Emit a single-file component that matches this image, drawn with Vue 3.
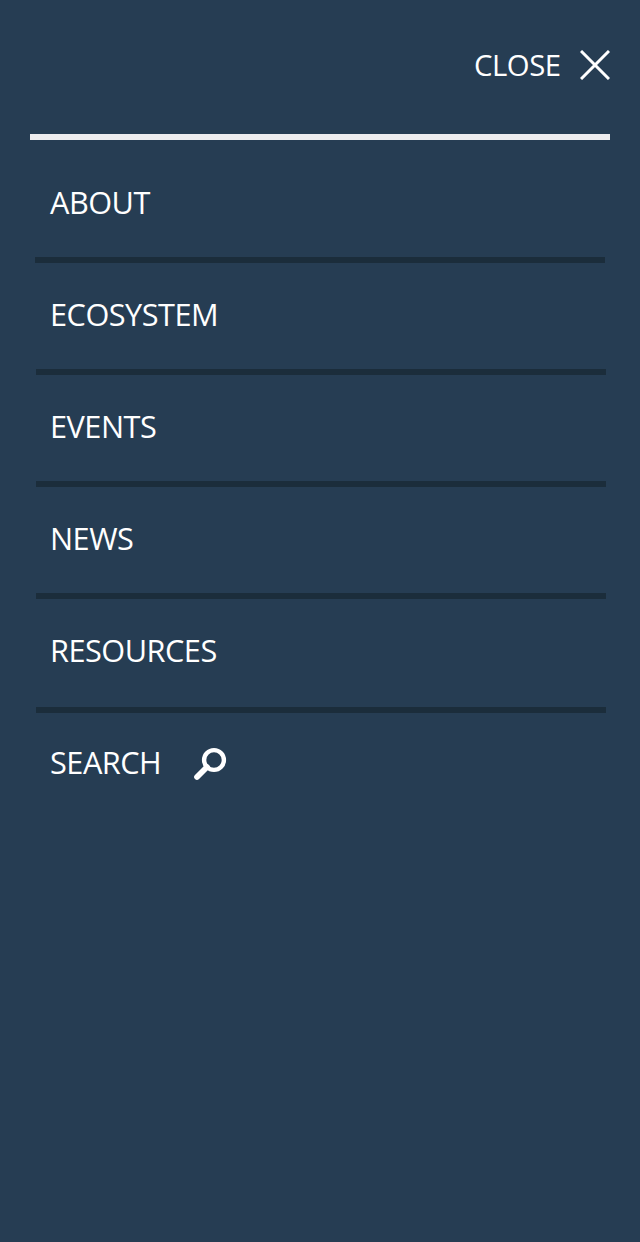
<script setup>
const items = [
  { label: 'ABOUT', size: 'first' },
  { label: 'ECOSYSTEM' },
  { label: 'EVENTS' },
  { label: 'NEWS' },
  { label: 'RESOURCES', size: 'last' },
]
</script>

<template>
  <nav class="menu">
    <header class="top">
      <button class="close">
        <span>CLOSE</span>
        <svg class="cross" width="30" height="30" viewBox="0 0 30 30">
          <path d="M1 1L29 29M29 1L1 29" fill="none" stroke="#fff" stroke-width="3" />
        </svg>
      </button>
    </header>
    <ul class="list">
      <li v-for="item in items" :key="item.label" class="item" :class="item.size">
        <a class="label">{{ item.label }}</a>
      </li>
      <li class="search">
        <a class="label">SEARCH</a>
        <svg class="glass" width="34" height="34" viewBox="0 0 34 34">
          <circle cx="21" cy="13" r="9.9" fill="none" stroke="#fff" stroke-width="4.4" />
          <path d="M14 20L4 30" fill="none" stroke="#fff" stroke-width="5.7" stroke-linecap="round" />
        </svg>
      </li>
    </ul>
  </nav>
</template>

<style>
body {
  background: #263d53;
}
</style>

<style scoped>
.menu {
  box-sizing: border-box;
  height: 1242px;
  padding: 0 30px;
  background: #263d53;
  color: #fff;
  font: 30.7px/40px "Open Sans", "Noto Sans", sans-serif;
  letter-spacing: -0.5px;
}
.top {
  box-sizing: border-box;
  height: 140px;
  padding-top: 45px;
  border-bottom: 6px solid #ededef;
}
.close {
  display: flex;
  align-items: center;
  gap: 19.5px;
  margin-left: auto;
  padding: 0;
  border: 0;
  background: none;
  color: inherit;
  font: inherit;
  font-size: 29.3px;
  letter-spacing: -0.5px;
}
.list {
  margin: 0 4px 0 6px;
  padding: 0;
  list-style: none;
}
.item {
  box-sizing: border-box;
  height: 112px;
  padding: 31px 0 0 14px;
  border-bottom: 6px solid #1b2d3b;
}
.first {
  height: 123px;
  margin: 0 1px 0 -1px;
  padding: 42px 0 0 15px;
}
.last {
  height: 114px;
}
.search {
  display: flex;
  gap: 31.4px;
  padding: 29px 0 0 14px;
}
.glass {
  margin-top: 5px;
}
</style>
